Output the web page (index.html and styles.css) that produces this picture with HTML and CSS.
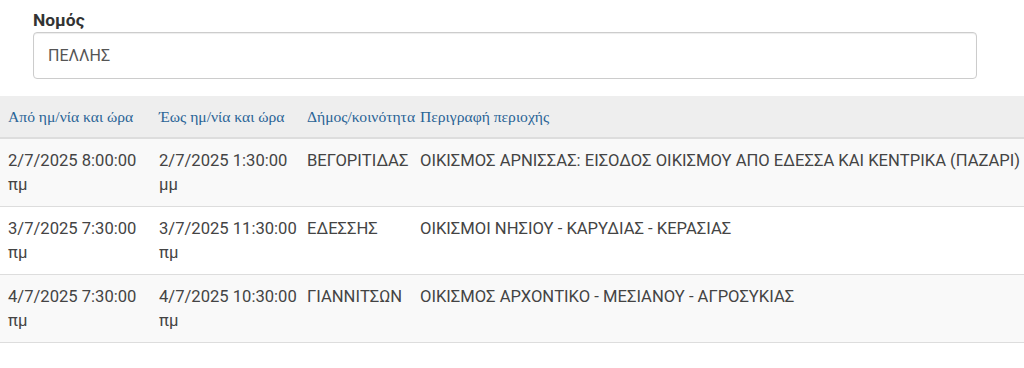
FILE: index.html
```html
<!DOCTYPE html>
<html lang="el">
<head>
<meta charset="utf-8">
<link rel="stylesheet" href="styles.css">
</head>
<body>
<div class="filter">
  <label class="filter-label">Νομός</label>
  <div class="filter-input">ΠΕΛΛΗΣ</div>
</div>
<table class="outages">
  <colgroup>
    <col class="c1"><col class="c2"><col class="c3"><col class="c4">
  </colgroup>
  <thead>
    <tr>
      <th>Από ημ/νία και ώρα</th>
      <th>Έως ημ/νία και ώρα</th>
      <th>Δήμος/κοινότητα</th>
      <th>Περιγραφή περιοχής</th>
    </tr>
  </thead>
  <tbody>
    <tr class="odd">
      <td>2/7/2025 8:00:00 πμ</td>
      <td>2/7/2025 1:30:00 μμ</td>
      <td>ΒΕΓΟΡΙΤΙΔΑΣ</td>
      <td>ΟΙΚΙΣΜΟΣ ΑΡΝΙΣΣΑΣ: ΕΙΣΟΔΟΣ ΟΙΚΙΣΜΟΥ ΑΠΟ ΕΔΕΣΣΑ ΚΑΙ ΚΕΝΤΡΙΚΑ (ΠΑΖΑΡΙ)</td>
    </tr>
    <tr>
      <td>3/7/2025 7:30:00 πμ</td>
      <td>3/7/2025 11:30:00 πμ</td>
      <td>ΕΔΕΣΣΗΣ</td>
      <td>ΟΙΚΙΣΜΟΙ ΝΗΣΙΟΥ - ΚΑΡΥΔΙΑΣ - ΚΕΡΑΣΙΑΣ</td>
    </tr>
    <tr class="odd">
      <td>4/7/2025 7:30:00 πμ</td>
      <td>4/7/2025 10:30:00 πμ</td>
      <td>ΓΙΑΝΝΙΤΣΩΝ</td>
      <td>ΟΙΚΙΣΜΟΣ ΑΡΧΟΝΤΙΚΟ - ΜΕΣΙΑΝΟΥ - ΑΓΡΟΣΥΚΙΑΣ</td>
    </tr>
  </tbody>
</table>
</body>
</html>
```
FILE: styles.css
```css
html, body {
  margin: 0;
  padding: 0;
  background: #fff;
}
body {
  font-family: Roboto, "Noto Sans", sans-serif;
  color: #333;
}
.filter {
  padding: 9px 47px 0 33px;
}
.filter-label {
  display: block;
  font-weight: bold;
  font-size: 17.4px;
  line-height: 22px;
  margin-bottom: 1px;
  color: #333;
}
.filter-input {
  box-sizing: border-box;
  height: 47px;
  border: 1px solid #ccc;
  border-radius: 4px;
  box-shadow: inset 0 1px 1px rgba(0, 0, 0, 0.075);
  padding: 0 14px;
  font-size: 16px;
  line-height: 45px;
  color: #555;
}
.outages {
  margin-top: 17px;
  width: 100%;
  border-collapse: collapse;
  table-layout: fixed;
}
.c1 { width: 155px; }
.c2 { width: 148px; }
.c3 { width: 113px; }
.outages th {
  background: #eee;
  font-family: "Liberation Serif", "Times New Roman", serif;
  font-weight: normal;
  font-size: 15.6px;
  color: #2a6496;
  text-align: left;
  padding: 11px 4px 10px;
  line-height: 20px;
  border-bottom: 2px solid #ddd;
  white-space: nowrap;
}
.outages td {
  font-size: 16.6px;
  line-height: 24px;
  color: #444;
  padding: 10px 4px 9px;
  vertical-align: top;
  border-top: 1px solid #ddd;
}
.outages th:first-child,
.outages td:first-child {
  padding-left: 8px;
}
.outages td:last-child {
  padding-right: 0;
}
.outages tr.odd td {
  background: #f9f9f9;
}
.outages tbody tr:last-child td {
  border-bottom: 1px solid #ddd;
}
```
